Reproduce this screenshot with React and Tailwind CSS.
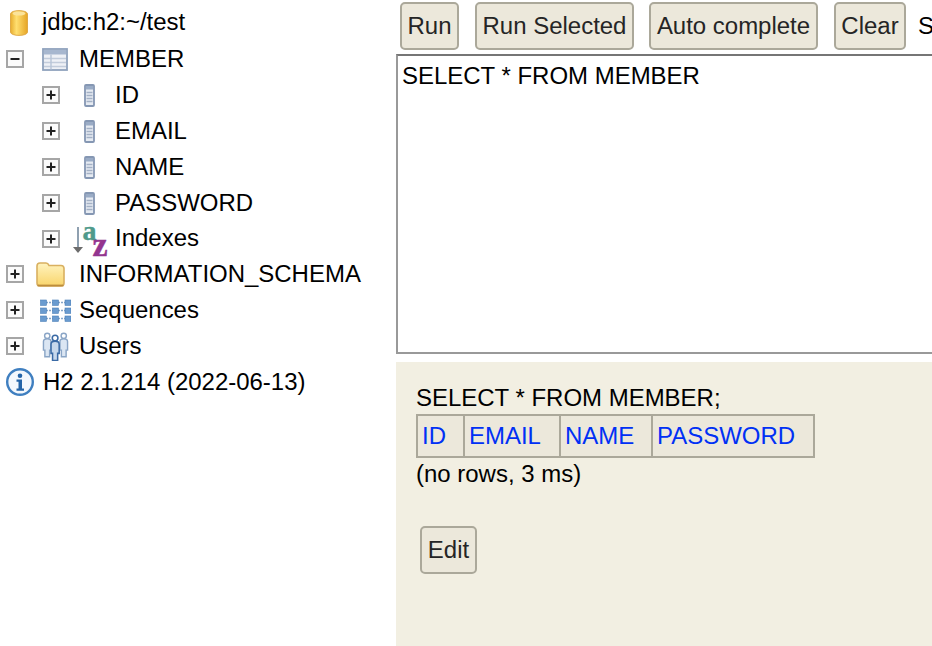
const font = { fontFamily: '"Liberation Sans", Arial, sans-serif' };

function Toggle({ open }) {
  return (
    <svg width="18" height="18" viewBox="0 0 18 18" className="shrink-0">
      <rect x="1" y="1" width="16" height="16" fill="#fbfbfb" stroke="#a6a6a6" strokeWidth="2" />
      <path d="M4.500 9h9" stroke="#222" strokeWidth="2" />
      {!open && <path d="M9 4.500v9" stroke="#222" strokeWidth="2" />}
    </svg>
  );
}

function Db() {
  return (
    <svg width="20" height="28" viewBox="0 0 20 28">
      <defs>
        <linearGradient id="dbg" x1="0" x2="1" y1="0" y2="0">
          <stop offset="0" stopColor="#e8ad2e" />
          <stop offset="0.35" stopColor="#ffdf70" />
          <stop offset="1" stopColor="#e6a526" />
        </linearGradient>
      </defs>
      <path d="M1.500 5c0-4.500 17-4.500 17 0v18c0 4.500-17 4.500-17 0z" fill="url(#dbg)" stroke="#e0aa48" strokeWidth="1" />
      <ellipse cx="10" cy="4.500" rx="6.500" ry="2" fill="#fbe39a" />
    </svg>
  );
}

function TableIcon() {
  return (
    <svg width="26" height="23" viewBox="0 0 26 23">
      <rect x="1" y="1" width="24" height="21" fill="#eef1f6" stroke="#8fa2bd" strokeWidth="1.800" />
      <rect x="2" y="2" width="22" height="4.500" fill="#a7b7cf" />
      <path d="M2 10.500h22M2 14.500h22M2 18.500h22" stroke="#c2ccdb" strokeWidth="1.400" />
      <path d="M9 6.500v15" stroke="#b7c4d7" strokeWidth="1.400" />
    </svg>
  );
}

function Column() {
  return (
    <svg width="11" height="23" viewBox="0 0 11 23">
      <rect x="1" y="1" width="9" height="21" rx="1" fill="#e6ebf2" stroke="#8597b3" strokeWidth="1.800" />
      <rect x="2" y="2" width="7" height="3.500" fill="#9aacc6" />
      <path d="M2.500 8.500h6M2.500 11.500h6M2.500 14.500h6M2.500 17.500h6" stroke="#a4b1c5" strokeWidth="1.300" />
    </svg>
  );
}

function IndexIcon() {
  return (
    <svg width="35" height="35" viewBox="0 0 35 35" className="overflow-visible">
      <path d="M5 6v22" stroke="#8fa0b0" strokeWidth="2" />
      <path d="M0 26h10l-5 6z" fill="#6c6c6c" />
      <text x="9.500" y="18.500" fontFamily="Liberation Serif, serif" fontWeight="700" fontSize="28" fill="#4f9a8b" stroke="#4f9a8b" strokeWidth="0.400">a</text>
      <text x="19.500" y="35" fontFamily="Liberation Serif, serif" fontWeight="700" fontSize="34" fill="#93358f" stroke="#93358f" strokeWidth="0.500">z</text>
    </svg>
  );
}

function Folder() {
  return (
    <svg width="29" height="25" viewBox="0 0 29 25">
      <defs>
        <linearGradient id="fg" x1="0" x2="0" y1="0" y2="1">
          <stop offset="0" stopColor="#fff3be" />
          <stop offset="1" stopColor="#f9d56c" />
        </linearGradient>
      </defs>
      <path d="M1 4c0-2 1-3 3-3h6c1.500 0 2.300.7 3 2.500h12c2 0 3 1 3 3V21c0 2-1 3-3 3H4c-2 0-3-1-3-3z" fill="url(#fg)" stroke="#d9b060" strokeWidth="1.600" />
      <path d="M1.500 23.500h26" stroke="#bd8d3c" strokeWidth="1.800" />
    </svg>
  );
}

function Sequence() {
  const xs = [0.500, 12.500, 25];
  const ys = [1, 9, 17];
  return (
    <svg width="31" height="23" viewBox="0 0 31 23">
      <path d="M6 3.500h20M6 11.500h20M6 19.500h20" stroke="#86a5c8" strokeWidth="1.400" strokeDasharray="2 1" />
      {ys.map((y) =>
        xs.map((x) => <rect key={`${x}-${y}`} x={x} y={y} width="6" height="5.400" fill="#6a9bcf" stroke="#4a7fb7" strokeWidth="0.600" />)
      )}
    </svg>
  );
}

function Users() {
  const Person = ({ x, y, s, fill, body }) => (
    <g transform={`translate(${x} ${y}) scale(${s})`}>
      <circle cx="5" cy="3" r="2.800" fill="#fff" stroke={fill} strokeWidth="1.500" />
      <path d="M1 9c0-2 1-3 4-3s4 1 4 3v9H7.500v7h-5v-7H1z" fill={body} stroke={fill} strokeWidth="1.500" />
    </g>
  );
  return (
    <svg width="27" height="29" viewBox="0 0 27 29">
      <Person x="0.500" y="1" s="0.950" fill="#8aa5c6" body="#dbe6f3" />
      <Person x="17" y="1" s="0.950" fill="#8aa5c6" body="#dbe6f3" />
      <Person x="8" y="3" s="1.020" fill="#3a6aa5" body="#c7d8ec" />
    </svg>
  );
}

function Info() {
  return (
    <svg width="30" height="30" viewBox="0 0 30 30">
      <circle cx="15" cy="15" r="12.800" fill="#f4f8fd" stroke="#3f7fc0" strokeWidth="2.400" />
      <circle cx="15" cy="8.800" r="2.300" fill="#2464a8" />
      <path d="M11.500 12.500h5.500v9h2v2.200h-7.500v-2.200h2v-6.800h-2z" fill="#2464a8" />
    </svg>
  );
}

function Row({ indent, icon, iconClass, label, open, className = "h-9", textClass = "" }) {
  return (
    <div className={`flex shrink-0 items-center whitespace-nowrap ${className}`}>
      <div className={`flex shrink-0 ${indent ? "ml-[42px]" : "ml-1.5"}`}><Toggle open={open} /></div>
      <div className={`flex w-[55px] shrink-0 items-center ${iconClass}`}>{icon}</div>
      <span className={textClass}>{label}</span>
    </div>
  );
}

function Btn({ children, className }) {
  return (
    <button className={`h-[48px] shrink-0 rounded-[5px] border-2 border-[#aba89a] bg-[#ece8db] text-[#252525] ${className}`}>
      {children}
    </button>
  );
}

export default function App() {
  return (
    <div className="flex h-[646px] w-[932px] overflow-hidden bg-white text-[23.98px] leading-none text-black" style={font}>
      <div className="flex w-[396px] shrink-0 flex-col pt-1">
        <div className="flex h-[37px] shrink-0 items-center whitespace-nowrap pb-px">
          <div className="flex w-[42px] shrink-0 justify-center pr-1 pt-px"><Db /></div>
          <span>jdbc:h2:~/test</span>
        </div>
        <Row open icon={<TableIcon />} iconClass="pl-[18px]" label="MEMBER" />
        <Row indent icon={<Column />} iconClass="pl-6" label="ID" />
        <Row indent icon={<Column />} iconClass="pl-6" label="EMAIL" />
        <Row indent icon={<Column />} iconClass="pl-6" label="NAME" />
        <Row indent icon={<Column />} iconClass="pl-6" label="PASSWORD" />
        <Row indent icon={<IndexIcon />} iconClass="pl-[13px]" label="Indexes" className="h-[35px]" textClass="-mt-px" />
        <Row icon={<Folder />} iconClass="pl-3" label="INFORMATION_SCHEMA" />
        <Row icon={<Sequence />} iconClass="pl-4" label="Sequences" />
        <Row icon={<Users />} iconClass="pl-[18px]" label="Users" />
        <div className="flex h-9 shrink-0 items-center whitespace-nowrap">
          <div className="flex w-[43px] shrink-0 justify-center pr-1"><Info /></div>
          <span>H2 2.1.214 (2022-06-13)</span>
        </div>
      </div>
      <div className="flex min-w-0 flex-1 flex-col">
        <div className="flex h-[54px] shrink-0 items-start overflow-hidden pl-1 pt-0.5 whitespace-nowrap">
          <Btn className="w-[59px]">Run</Btn>
          <Btn className="ml-4 w-[159px]">Run Selected</Btn>
          <Btn className="ml-[15px] w-[169px]">Auto complete</Btn>
          <Btn className="ml-4 w-[72px]">Clear</Btn>
          <span className="ml-3 pt-3">S</span>
        </div>
        <div className="h-[300px] shrink-0 border-2 border-r-0 border-t-[#767676] border-b-[#999] border-l-[#999] px-1 pt-2">
          SELECT * FROM MEMBER
        </div>
        <div className="mt-2 flex-1 bg-[#f2efe2] pl-5 pt-6">
          <div className="h-[28px]">SELECT * FROM MEMBER;</div>
          <table className="border-collapse border-2 border-[#aba89a] bg-[#ece8db] text-[#0030f5]">
            <tbody>
              <tr className="h-[42px]">
                <td className="w-[47px] border-2 border-[#aba89a] pl-1">ID</td>
                <td className="w-[96px] border-2 border-[#aba89a] pl-1">EMAIL</td>
                <td className="w-[92px] border-2 border-[#aba89a] pl-1">NAME</td>
                <td className="w-[162px] border-2 border-[#aba89a] pl-1">PASSWORD</td>
              </tr>
            </tbody>
          </table>
          <div className="pt-1">(no rows, 3 ms)</div>
          <Btn className="mt-10 ml-1 w-[57px]">Edit</Btn>
        </div>
      </div>
    </div>
  );
}
